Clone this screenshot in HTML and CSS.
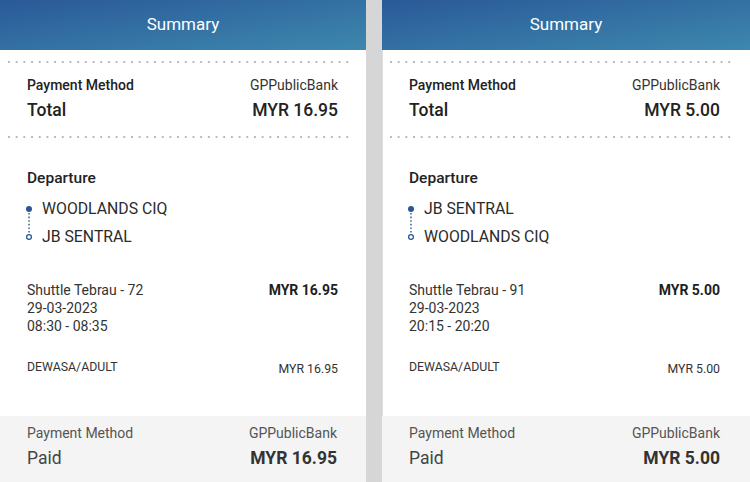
FILE: index.html
```html
<!DOCTYPE html>
<html lang="en">
<head>
    <meta charset="UTF-8">
    <meta name="viewport" content="width=device-width, initial-scale=1.0">
    <title>Summary</title>
    <link rel="stylesheet" href="styles.css">
</head>
<body>
<div class="screen screen-left">
    <div class="header">Summary</div>
    <div class="content">
        <div class="dots"></div>
        <div class="summary">
            <div class="row method"><span>Payment Method</span><span class="value">GPPublicBank</span></div>
            <div class="row total"><span>Total</span><span>MYR 16.95</span></div>
        </div>
        <div class="dots"></div>
        <div class="departure">
            <h3>Departure</h3>
            <div class="route">
                <svg class="route-line" width="10" height="36" viewBox="0 0 10 36">
                    <circle cx="5" cy="4" r="3" fill="#2b5595"/>
                    <line x1="5" y1="8" x2="5" y2="29" stroke="#2b5595" stroke-width="1.4" stroke-dasharray="1.6 2"/>
                    <circle cx="5" cy="32" r="2.4" fill="#fff" stroke="#2b5595" stroke-width="1.3"/>
                </svg>
                <div class="stops">
                    <div>WOODLANDS CIQ</div>
                    <div>JB SENTRAL</div>
                </div>
            </div>
        </div>
        <div class="row trip">
            <div>Shuttle Tebrau - 72<br>29-03-2023<br>08:30 - 08:35</div>
            <div class="price">MYR 16.95</div>
        </div>
        <div class="row passenger"><span>DEWASA/ADULT</span><span>MYR 16.95</span></div>
    </div>
    <div class="paid">
        <div class="row paid-method"><span>Payment Method</span><span>GPPublicBank</span></div>
        <div class="row paid-total"><span>Paid</span><span class="price">MYR 16.95</span></div>
    </div>
</div>

<div class="screen screen-right">
    <div class="header">Summary</div>
    <div class="content">
        <div class="dots"></div>
        <div class="summary">
            <div class="row method"><span>Payment Method</span><span class="value">GPPublicBank</span></div>
            <div class="row total"><span>Total</span><span>MYR 5.00</span></div>
        </div>
        <div class="dots"></div>
        <div class="departure">
            <h3>Departure</h3>
            <div class="route">
                <svg class="route-line" width="10" height="36" viewBox="0 0 10 36">
                    <circle cx="5" cy="4" r="3" fill="#2b5595"/>
                    <line x1="5" y1="8" x2="5" y2="29" stroke="#2b5595" stroke-width="1.4" stroke-dasharray="1.6 2"/>
                    <circle cx="5" cy="32" r="2.4" fill="#fff" stroke="#2b5595" stroke-width="1.3"/>
                </svg>
                <div class="stops">
                    <div>JB SENTRAL</div>
                    <div>WOODLANDS CIQ</div>
                </div>
            </div>
        </div>
        <div class="row trip">
            <div>Shuttle Tebrau - 91<br>29-03-2023<br>20:15 - 20:20</div>
            <div class="price">MYR 5.00</div>
        </div>
        <div class="row passenger"><span>DEWASA/ADULT</span><span>MYR 5.00</span></div>
    </div>
    <div class="paid">
        <div class="row paid-method"><span>Payment Method</span><span>GPPublicBank</span></div>
        <div class="row paid-total"><span>Paid</span><span class="price">MYR 5.00</span></div>
    </div>
</div>
</body>
</html>
```

FILE: styles.css
```css
/* 订单摘要页面 */
body {
    font-family: Roboto, "Liberation Sans", Arial, sans-serif;
    background-color: #d6d6d6;
    margin: 0;
    padding: 0;
    display: flex;
    justify-content: space-between;
    height: 100vh;
    overflow: hidden;
    color: #222;
}
.screen {
    display: flex;
    flex-direction: column;
    height: 100%;
    background-color: #fff;
}
.screen-left {
    width: 366px;
}
.screen-right {
    width: 368px;
}
.header {
    height: 50px;
    line-height: 48px;
    text-align: center;
    color: #fff;
    font-size: 17px;
    background: linear-gradient(to bottom right, #2a5998, #3d88ae);
}
.content {
    flex: 1;
    padding: 0 28px 0 27px;
}
.screen-right .content {
    border-left: 1px solid #dedede;
    padding-left: 26px;
    padding-right: 30px;
}
.row {
    display: flex;
    justify-content: space-between;
    align-items: flex-start;
}
.dots {
    height: 2px;
    margin: 0 -14px 0 -19px;
    background-image: linear-gradient(to right, #b9b9b9 1.6px, transparent 1.6px);
    background-size: 7.7px 2px;
    background-repeat: repeat-x;
}
.content > .dots:first-child {
    margin-top: 11px;
}
.summary {
    padding: 12px 0 14px;
}
.method {
    font-size: 14px;
    line-height: 20px;
    font-weight: 500;
}
.method .value {
    font-weight: 400;
    color: #333;
}
.total {
    margin-top: 3px;
    font-size: 17.5px;
    line-height: 24px;
    font-weight: 500;
}
.departure {
    padding-top: 30px;
}
.departure h3 {
    margin: 0;
    font-size: 15.5px;
    line-height: 20px;
    font-weight: 500;
}
.route {
    display: flex;
    align-items: center;
    margin-top: 7px;
    margin-left: -3px;
}
.route-line {
    flex-shrink: 0;
    margin-right: 8px;
}
.stops {
    font-size: 15.8px;
    line-height: 28px;
    color: #2b2b2b;
}
.trip {
    padding-top: 30px;
    font-size: 14px;
    line-height: 18px;
    color: #333;
}
.trip .price {
    font-weight: 700;
    color: #1e1e1e;
}
.passenger {
    margin-top: 24px;
    font-size: 12.3px;
    line-height: 16px;
    color: #333;
}
.passenger span:last-child {
    margin-top: 2px;
}
.paid {
    box-sizing: border-box;
    height: 66px;
    padding: 8px 29px 0 27px;
    background-color: #f4f4f4;
}
.screen-right .paid {
    padding-right: 30px;
}
.paid-method {
    font-size: 14px;
    line-height: 18px;
    color: #555;
}
.paid-total {
    margin-top: 4px;
    font-size: 17.5px;
    line-height: 24px;
    color: #444;
}
.paid-total .price {
    font-weight: 700;
    color: #333;
}
```
